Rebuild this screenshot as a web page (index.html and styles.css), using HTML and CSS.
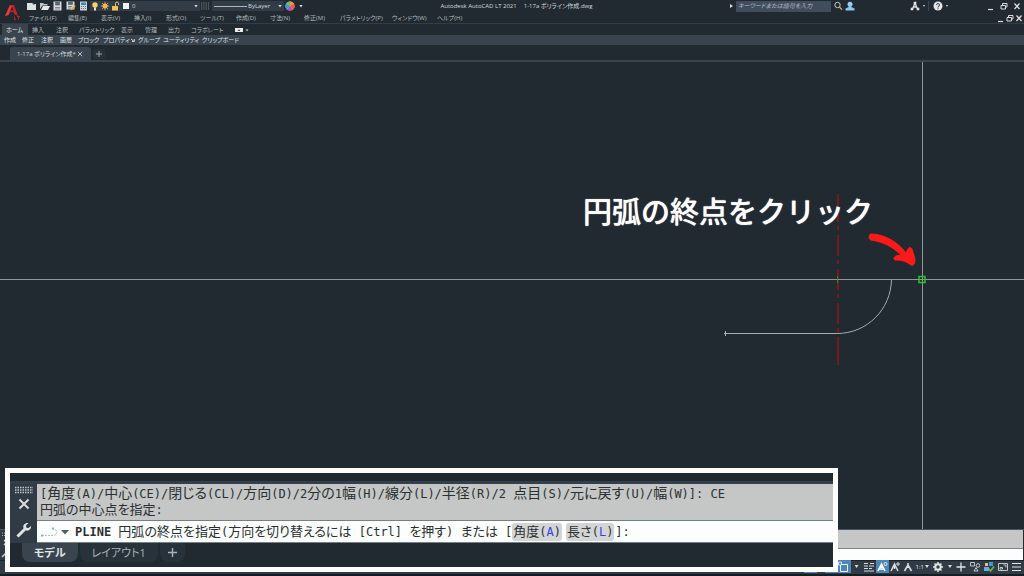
FILE: index.html
```html
<!DOCTYPE html>
<html lang="ja">
<head>
<meta charset="utf-8">
<title>Autodesk AutoCAD LT 2021</title>
<link rel="stylesheet" href="styles.css">
</head>
<body>
<header class="top">
  <button class="logo" aria-label="アプリケーション メニュー">
    <svg width="18" height="20" viewBox="0 0 18 20"><path d="M1 14 6 3h4l4 11-3.500-1.500L9.500 10H6l-1.500 3z" fill="#c4202b"/><path d="M6.500 8.500 8 5l1.500 3.500z" fill="#20292f"/><path d="M1 14 6 3l1.500 1-3 9z" fill="#e23a40"/><path d="M10.500 14.500v3h1.500M13 14.500h3M14.500 14.500v3" stroke="#b3262e" fill="none"/></svg>
  </button>
  <div class="bars">
    <div class="titlebar">
      <div class="quick">
        <button aria-label="新規"><svg width="10" height="10" viewBox="0 0 10 10"><path d="M0 2h5l1 1h3v6H0z" fill="#dfe2e3"/><path d="M5 1.500 8.500 4H6z" fill="#8e979c"/></svg></button>
        <button aria-label="開く"><svg width="10" height="10" viewBox="0 0 10 10"><path d="M0 8V2h3l1 1h3.500v1.500H2.500z" fill="#bfc5c8"/><path d="M3 5h7L8 9H1z" fill="#e6e8e9"/></svg></button>
        <button aria-label="保存"><svg width="10" height="10" viewBox="0 0 10 10"><path d="M.5.5h8v9h-8z" fill="#d5d8da"/><path d="M2.500 1h4v3h-4zM2 6.500h5M2 8h5" fill="#59656d" stroke="#59656d" stroke-width=".7"/></svg></button>
        <button aria-label="名前を付けて保存"><svg width="10" height="10" viewBox="0 0 10 10"><path d="M.5.500h8v8h-8z" fill="#d5d8da"/><path d="M2.500 1h4v2.500h-4zM2 5.500h4M2 7h3" fill="#59656d" stroke="#59656d" stroke-width=".7"/><path d="m4.500 9.500 1-2L8.500 4l1.200 1-3 3.700z" fill="#e5a53b"/></svg></button>
        <button aria-label="印刷"><svg width="10" height="10" viewBox="0 0 10 10"><path d="M1 .5h7v9H1z" fill="#cfd4d7"/><path d="M2 1.500h5V4H2z" fill="#3f85bd"/><path d="M2 5.500h5M2 7.500h5" stroke="#66727a" stroke-dasharray="1 1"/></svg></button>
      </div>
      <div class="layer">
        <svg width="42" height="10" viewBox="0 0 42 10"><circle cx="5" cy="4" r="2.700" fill="#f5cf72"/><path d="M4 6.500h2v3H4z" fill="#e8e1c8"/><circle cx="15" cy="5" r="2.500" fill="#f3b94f"/><path d="M15 .8v8.400M10.800 5h8.400M12 2l6 6M18 2l-6 6" stroke="#f3b94f" stroke-width=".8"/><path d="M22 5h6v4.500h-6z" fill="#f1c15c"/><path d="M25.500 5V2.500a1.500 1.500 0 0 1 3 0V4" stroke="#d9c48c" fill="none"/><path d="M33 2h6v6h-6z" fill="#f2f2f2"/></svg>
        <select aria-label="画層"><option>0</option></select>
        <i class="caret"></i>
      </div>
      <svg class="hatch" width="10" height="10" viewBox="0 0 10 10"><path d="M0 2h9M0 4h9M0 6h9M0 8h9" stroke="#737e85" stroke-dasharray="1.300 1"/></svg>
      <div class="linetype">
        <span class="rule"></span>
        <select aria-label="線種"><option>ByLayer</option></select>
        <i class="caret"></i>
      </div>
      <button class="wheel" aria-label="色"><svg width="10" height="10" viewBox="0 0 10 10"><circle cx="5" cy="5" r="4.600" fill="#f0b23c"/><path d="M5 5V.4A4.600 4.600 0 0 1 9 3z" fill="#f4913c"/><path d="M5 5 9 2.700A4.600 4.600 0 0 1 7.500 9z" fill="#e9595a"/><path d="M5 5 7.500 9A4.600 4.600 0 0 1 2 8.500z" fill="#a456c2"/><path d="M5 5 2 8.500A4.600 4.600 0 0 1 1 2.700z" fill="#3d95df"/><path d="M5 5 1 2.700A4.600 4.600 0 0 1 5 .4z" fill="#59bd77"/></svg></button>
      <i class="caret"></i>
      <h1><span>Autodesk AutoCAD LT 2021</span><span>1-17a ポリライン作成.dwg</span></h1>
      <div class="tools">
        <i class="caret side"></i>
        <input class="search" type="text" aria-label="検索" placeholder="キーワードまたは語句を入力">
        <button class="find" aria-label="検索"><svg width="9" height="10" viewBox="0 0 9 10"><circle cx="3.500" cy="4" r="2.700" fill="none" stroke="#c3c8ca"/><path d="m5.500 6 2.500 2.700" stroke="#d0a56a" stroke-width="1.300"/></svg></button>
        <button class="user" aria-label="サインイン"><svg width="10" height="10" viewBox="0 0 10 10"><circle cx="5" cy="3.200" r="2.500" fill="#9bcdf0"/><path d="M.5 9.500V7.500L3.700 6V4h2.600v2l3.200 1.500v2z" fill="#8cc5ee"/></svg></button>
        <button class="app" aria-label="App Store"><svg width="10" height="10" viewBox="0 0 10 10"><path d="m5 2-2.500 6M5 2l2.500 6M3 6h4" stroke="#e1e4e5" stroke-width="1.300" fill="none"/><path d="M3.700.7h2.600v2.600H3.700zM.7 6.800h2.600v2.400H.7zM6.700 6.800h2.600v2.400H6.700z" fill="#e1e4e5"/></svg></button>
        <i class="caret tiny"></i>
        <span class="bar"></span>
        <button class="help" aria-label="ヘルプ"><svg width="10" height="10" viewBox="0 0 10 10"><circle cx="5" cy="5" r="4.500" fill="#e4e6e7"/><path d="M3.500 4a1.500 1.500 0 1 1 1.500 1.500V6.500M5 7.300v1" fill="none" stroke="#3c4850"/></svg></button>
        <i class="caret tiny"></i>
      </div>
      <div class="win">
        <button aria-label="最小化"><svg width="8" height="10" viewBox="0 0 8 10"><path d="M1 8.500h5" stroke="#d6dadc" stroke-width="1.200"/></svg></button>
        <button aria-label="元に戻す"><svg width="8" height="10" viewBox="0 0 8 10"><path d="M1 4.500h4.500V8H1zM2.500 4V2.500H7V6H6" fill="none" stroke="#d6dadc"/></svg></button>
        <button aria-label="閉じる"><svg width="8" height="10" viewBox="0 0 8 10"><path d="m1.500 2.500 5 5.500m0-5.500-5 5.500" stroke="#e3e6e7" stroke-width="1.200"/></svg></button>
      </div>
    </div>
    <div class="menubar">
      <nav class="menus">
        <button>ファイル(F)</button><button>編集(E)</button><button>表示(V)</button><button>挿入(I)</button><button>形式(O)</button><button>ツール(T)</button><button>作成(D)</button><button>寸法(N)</button><button>修正(M)</button><button>パラメトリック(P)</button><button>ウィンドウ(W)</button><button>ヘルプ(H)</button>
      </nav>
      <div class="win inner">
        <button aria-label="図面を最小化"><svg width="8" height="10" viewBox="0 0 8 10"><path d="M1 8.500h5" stroke="#d6dadc" stroke-width="1.200"/></svg></button>
        <button aria-label="図面を元に戻す"><svg width="8" height="10" viewBox="0 0 8 10"><path d="M1 4.500h4.500V8H1zM2.500 4V2.500H7V6H6" fill="none" stroke="#d6dadc"/></svg></button>
        <button aria-label="図面を閉じる"><svg width="8" height="10" viewBox="0 0 8 10"><path d="m1.500 2.500 5 5.500m0-5.500-5 5.500" stroke="#e3e6e7" stroke-width="1.200"/></svg></button>
      </div>
    </div>
  </div>
</header>
<nav class="ribbon">
  <button class="on">ホーム</button><button>挿入</button><button>注釈</button><button>パラメトリック</button><button>表示</button><button>管理</button><button>出力</button><button>コラボレート</button>
  <button class="view" aria-label="リボン表示"><svg width="14" height="6" viewBox="0 0 14 6"><path d="M0 1h8v4H0z" fill="#e9ebec"/><path d="m3 4 1-2 1 2z" fill="#28323a"/><path d="M10.500 2.500h3L12 4.200z" fill="#d6dadc"/></svg></button>
</nav>
<div class="panels">
  <button>作成</button><button>修正</button><button>注釈</button><button>画層</button><button>ブロック</button><button>プロパティ<svg width="4" height="4" viewBox="0 0 4 4"><path d="m0 1 3 2.500M3.300 1v2.500H1" stroke="#d2d6d8" fill="none"/></svg></button><button>グループ</button><button>ユーティリティ</button><button>クリップボード</button>
</div>
<div class="files">
  <div class="file"><span>1-17a ポリライン作成*</span><button aria-label="タブを閉じる"><svg width="6" height="6" viewBox="0 0 6 6"><path d="m.8.800 4.400 4.400m0-4.400L.8 5.200" stroke="#b6bcc0"/></svg></button></div>
  <button class="newfile" aria-label="新しいタブ"><svg width="6" height="6" viewBox="0 0 6 6"><path d="M0 3h6M3 0v6" stroke="#9aa3a8"/></svg></button>
</div>
<main class="canvas">
  <svg class="drawing" width="100%" height="100%" fill="none">
    <path d="M838 132V160M838 164V168M838 173V194M838 198V202M838 207V228M838 232V236M838 241V262M838 266V270M838 275V303" stroke="#741a20" stroke-width="2"/>
    <path d="M725 271.500h112c30 0 54-24 54.500-54" stroke="#a3acaf"/>
    <path d="M725.500 269v5M724 271.500h3" stroke="#b0b7ba"/>
    <line x1="0" y1="217.500" x2="100%" y2="217.500" stroke="#8e989c"/>
    <line x1="922.500" y1="0" x2="922.500" y2="100%" stroke="#8e989c"/>
    <path d="M837.500 214v7" stroke="#258b34"/>
    <path d="M919 214.500h6v6h-6z" stroke="#24c52b" stroke-width="1.500"/>
    <path d="M871 172C884 172 898 180 906 191L908 187C909 185 911 185 912 187L915 197C915 201 914 204 911 203C906 199 901 198 895 198C893 197 894 195 896 194L901 193C893 185 884 180 871 178C868 177 869 172 871 172z" fill="#ff1a1a" stroke="#ff1a1a"/>
  </svg>
  <p class="note">円弧の終点をクリック</p>
</main>
<div class="dock">
  <div class="dock-grip"><svg width="12" height="30" viewBox="0 0 12 30"><path d="M2 3h9M2 5.500h9" stroke="#aeb6ba" stroke-dasharray="1 1"/><path d="m4 10 5 5m0-5-5 5M2 27l6-6" stroke="#c9ced0" stroke-width="1.500"/></svg></div>
  <div class="dock-lines"><div class="dock-log"></div><div class="dock-input"></div></div>
</div>
<footer class="status">
  <button class="blue narrow" aria-label="直交モード"></button>
  <button class="blue" aria-label="スナップ"></button>
  <button class="blue" aria-label="オブジェクト スナップ"><svg width="12" height="12" viewBox="0 0 12 12"><path d="M2.500 3.500h7v7h-7z" fill="none" stroke="#e9f2fa"/><path d="M.5 1h3v3h-3z" fill="#5a93c6" stroke="#e9f2fa" stroke-width=".8"/></svg></button>
  <i class="caret"></i>
  <button aria-label="線の太さ"><svg width="12" height="12" viewBox="0 0 12 12"><path d="M1 2.500h4M7 2.500h4M1 5h4M6 5h5M1 7.500h4M6 7.500h3M1 10h10" stroke="#d6dadc" stroke-width="1.100"/></svg></button>
  <button class="blue" aria-label="注釈オブジェクト"><svg width="12" height="12" viewBox="0 0 12 12"><path d="m2 10 3.500-7L9 10M5.500 4v3M3.500 8h4" fill="none" stroke="#fff" stroke-width="1.600"/><circle cx="9.500" cy="3" r="1.500" fill="none" stroke="#fff" stroke-width=".8"/></svg></button>
  <button aria-label="自動尺度"><svg width="12" height="12" viewBox="0 0 12 12"><path d="m2 10 3.500-7L9 10M5.500 4v4" fill="none" stroke="#d9dddf" stroke-width="1.500"/><path d="M9 1v4M7 3h4" stroke="#d9dddf"/></svg></button>
  <button aria-label="注釈尺度を表示"><svg width="12" height="12" viewBox="0 0 12 12"><path d="m2.500 10 3.500-6 3.500 6M6 2v5" fill="none" stroke="#d9dddf" stroke-width="1.600"/></svg></button>
  <button class="scale">1:1</button><i class="caret close"></i>
  <span class="bar"></span>
  <button aria-label="ワークスペース"><svg width="12" height="12" viewBox="0 0 12 12"><circle cx="6" cy="6" r="2.700" fill="none" stroke="#e2e5e6" stroke-width="2"/><path d="M6 1v2M6 9v2M1 6h2M9 6h2M2.500 2.500l1.300 1.300M8.200 8.200l1.300 1.300M9.500 2.500 8.200 3.800M3.800 8.200 2.500 9.500" stroke="#e2e5e6" stroke-width="1.500"/></svg></button>
  <i class="caret near"></i>
  <button class="spaced" aria-label="注釈モニター"><svg width="12" height="12" viewBox="0 0 12 12"><path d="M6 1.500v9M1.500 6h9" stroke="#e2e5e6" stroke-width="1.300"/></svg></button>
  <button class="spaced" aria-label="選択表示"><svg width="12" height="12" viewBox="0 0 12 12"><path d="M1.500 1.500h4v3.500h-4zM5 10l2-3.500L9 10z" fill="none" stroke="#bfc6ca"/><circle cx="9" cy="4.500" r="1.800" fill="none" stroke="#bfc6ca"/></svg></button>
  <button class="spaced" aria-label="ハードウェア"><svg width="12" height="12" viewBox="0 0 12 12"><path d="M2 2h3v3H2z" fill="#efc167"/><path d="M6 1h4v4H6z" fill="#4893d3"/><path d="M1 6h5v4H1z" fill="#68ade0"/><path d="m5.500 7.500 2 2.500L11 5.500" fill="none" stroke="#63b85b" stroke-width="1.600"/></svg></button>
  <button aria-label="フルスクリーン"><svg width="12" height="12" viewBox="0 0 12 12"><path d="M1.500 2.500h9v7h-9z" fill="none" stroke="#bfc6ca"/><path d="M6.500 4H9v2.500M3 6.500h2.500V8H3z" fill="none" stroke="#bfc6ca"/></svg></button>
  <button aria-label="カスタマイズ"><svg width="12" height="12" viewBox="0 0 12 12"><path d="M2 2.500h9M2 6h9M2 9.500h9" stroke="#e2e5e6" stroke-width="1.200"/></svg></button>
</footer>
<section class="callout">
  <div class="command">
    <div class="side-tools">
      <svg width="20" height="8" viewBox="0 0 20 8"><path d="M1 1.500h18M1 4h18M1 6.500h18" stroke="#bec6ca" stroke-width="1.500" stroke-dasharray="1.500 1"/></svg>
      <button aria-label="閉じる"><svg width="12" height="12" viewBox="0 0 12 12"><path d="m1.500 1.500 9 9m0-9-9 9" stroke="#d9dddf" stroke-width="2"/></svg></button>
      <button class="wrench" aria-label="カスタマイズ"><svg width="16" height="16" viewBox="0 0 16 16"><path d="M1.500 14.500 9 7" stroke="#dfe3e5" stroke-width="3"/><path d="M12.500 1C9 .5 6.500 3 7.500 6l2.500 2.500c3 .8 5.500-1.500 5-4.500l-2.500 2-2.200-.300L10 3.500z" fill="#dfe3e5"/></svg></button>
    </div>
    <div class="lines">
      <div class="log">
        <p class="options">[<span>角度</span>(A)/<span>中心</span>(CE)/<span>閉じる</span>(CL)/<span>方向</span>(D)/2<span>分の</span>1<span>幅</span>(H)/<span>線分</span>(L)/<span>半径</span>(R)/2 <span>点目</span>(S)/<span>元に戻す</span>(U)/<span>幅</span>(W)]: CE</p>
        <p><span>円弧の中心点を指定</span>:</p>
      </div>
      <div class="prompt">
        <svg width="28" height="12" viewBox="0 0 28 12"><path d="M1 9.500h11c5 0 5-6 0-7" fill="none" stroke="#a9bfcb" stroke-dasharray="2 1"/><path d="M0 8.500h2v2H0zM11 1.500h2v2h-2z" fill="#75b5dc"/><path d="M20 4h8l-4 4.500z" fill="#555e62"/></svg>
        <p><b>PLINE</b> <span>円弧の終点を指定</span>(<span>方向を切り替えるには</span> [Ctrl] <span>を押す</span>) <span>または</span> [<button><span>角度</span>(<em>A</em>)</button><button><span>長さ</span>(<em>L</em>)</button>]:</p>
      </div>
    </div>
  </div>
  <div class="sheets">
    <button class="on">モデル</button><button>レイアウト1</button><button class="add" aria-label="新規レイアウト"><svg width="9" height="9" viewBox="0 0 9 9"><path d="M0 4.500h9M4.500 0v9" stroke="#a9b1b5" stroke-width="1.500"/></svg></button>
  </div>
</section>
</body>
</html>
```
FILE: styles.css
```css
* { box-sizing: border-box; }
body {
  margin: 0;
  height: 100vh;
  display: flex;
  flex-direction: column;
  overflow: hidden;
  position: relative;
  background: #202a30;
  color: #d6dadc;
  font: 6px/10px "Open Sans", "Noto Sans CJK JP", sans-serif;
  font-feature-settings: "palt";
}
button, select, input {
  margin: 0;
  padding: 0;
  border: 0;
  background: none;
  color: inherit;
  font: inherit;
  font-feature-settings: inherit;
  text-align: left;
  white-space: nowrap;
}
svg { display: block; flex: none; }
p { margin: 0; }
.caret {
  flex: none;
  width: 4px;
  height: 3px;
  background: #d6dadc;
  clip-path: polygon(0 0, 100% 0, 50% 100%);
}
.caret.side { width: 3px; height: 4px; clip-path: polygon(0 0, 100% 50%, 0 100%); }
.caret.tiny { width: 2px; height: 2px; margin: 0 3px; }
.bar { width: 1px; height: 10px; background: #3c474f; }

.top { display: flex; border-bottom: 1px solid #323d47; }
.logo { width: 24px; padding-left: 4px; }
.bars { flex: 1; }
.titlebar { display: flex; align-items: center; height: 12px; }
.quick { display: flex; gap: 3px; padding-left: 3px; }
.layer, .linetype { display: flex; align-items: center; height: 10px; background: #313c46; }
.layer { width: 110px; margin-left: 1px; padding-right: 2px; }
.layer select, .linetype select { flex: 1; appearance: none; height: 10px; }
.hatch { margin: 0 1px; }
.linetype { width: 72px; padding: 0 2px; }
.rule { width: 33px; height: 1px; margin-right: 1px; background: #aeb5b8; }
.wheel { margin: 0 4px 0 1px; }
h1 {
  flex: 1;
  display: flex;
  justify-content: center;
  gap: 7px;
  margin: 0;
  font: inherit;
  white-space: nowrap;
}
.tools { display: flex; align-items: center; width: 257px; }
.search { width: 95px; height: 11px; margin: 0 3px; padding: 0 2px; background: #414d5d; font-style: italic; }
.search::placeholder { color: #b5bcc4; opacity: 1; }
.user { margin-left: 2px; }
.app { margin-left: 55px; }
.help { margin-left: 4px; }
.win { display: flex; gap: 5px; width: 37px; }
.win.inner { width: 27px; gap: 1px; }
.menubar { display: flex; justify-content: space-between; align-items: center; height: 11px; padding-left: 5px; color: #b5bbbe; }
.menus { display: grid; grid-template-columns: 39px 33px 33px 32px 34px 36px 34px 34px 36px 52px 45px 40px; }

.ribbon {
  display: grid;
  grid-template-columns: 26px 24px 23px 42px 24px 23px 23px 48px 14px;
  align-items: center;
  height: 11px;
  padding-left: 2px;
  color: #b5bbbe;
}
.ribbon button { padding: 0 4px; height: 11px; }
.ribbon .on { background: #39444f; color: #e8ebec; }
.ribbon .view { height: auto; padding: 0; }
.panels {
  display: grid;
  grid-template-columns: 18px 19px 19px 18px 25px 35px 25px 39px 44px;
  align-items: center;
  height: 10px;
  padding-left: 1px;
  background: #39444f;
  color: #dfe2e4;
}
.panels button { display: flex; align-items: center; gap: 1px; padding-left: 3px; }
.files { display: flex; align-items: center; height: 17px; padding: 2px 0 0 10px; border-bottom: 2px solid #39444f; }
.file {
  display: flex;
  align-items: center;
  justify-content: space-between;
  width: 81px;
  height: 13px;
  padding: 0 8px 0 7px;
  border-radius: 3px 3px 0 0;
  background: #39444f;
}
.newfile { margin-left: 2px; padding: 2px 3px; border-radius: 2px; background: #28323a; }

.canvas { flex: 1; position: relative; min-height: 0; }
.drawing { position: absolute; inset: 0; }
.note {
  position: absolute;
  left: 583px;
  top: 128px;
  color: #fff;
  font: 500 29px/40px "Noto Sans CJK JP", sans-serif;
  font-feature-settings: normal;
  text-shadow: 0 0 1px #fff;
  white-space: nowrap;
}
.dock { display: flex; height: 31px; padding-right: 1px; border-top: 1px solid #4b565e; }
.dock-grip { width: 12px; background: #303b45; }
.dock-lines { flex: 1; }
.dock-log { height: 19px; background: #c4c7c6; border-bottom: 1px solid #7b8488; }
.dock-input { height: 11px; background: #fbfefd; }
.status {
  display: flex;
  align-items: center;
  justify-content: flex-end;
  height: 16px;
  padding: 0 1px 2px;
  border-top: 1px solid #1b2329;
  border-bottom: 2px solid #161d22;
  background: #303b45;
}
.status button { height: 13px; padding-right: 1px; }
.status .blue { width: 13px; background: #4f86b8; }
.status .narrow { margin-right: 8px; }
.status .caret { margin: 0 4px; }
.status .scale { color: #e2e5e6; padding: 0 0 0 1px; }
.status .caret.close { margin: 0 2px 0 1px; }
.status .caret.near { margin: 0 3px; }
.status .spaced { padding-right: 2px; }

.callout {
  position: absolute;
  left: 5px;
  right: 186px;
  bottom: 4px;
  padding-top: 8px;
  border: 5px solid #fff;
  background: #202a30;
}
.command { display: flex; border-top: 3px solid #343f4c; background: #303b45; }
.side-tools { display: flex; flex-direction: column; align-items: center; gap: 4px; width: 27px; padding-top: 2px; }
.wrench { margin-top: 8px; }
.lines { flex: 1; color: #2b3032; font: 12px/16px "DejaVu Sans Mono", "Noto Sans CJK JP", monospace; font-feature-settings: "palt"; white-space: nowrap; }
.lines span { font-family: "Noto Sans CJK JP", sans-serif; font-size: 13px; line-height: 0; }
.lines .options span { font-size: 14px; }
.log { height: 37px; padding: 2px 3px; border-bottom: 1px solid #777f82; background: #c4c7c6; }
.prompt { display: flex; align-items: center; gap: 6px; height: 22px; padding-left: 4px; border-bottom: 1px solid #777f82; background: #fbfefd; }
.prompt button { margin-right: 4px; padding: 1px; border-radius: 3px; background: #d3d5d5; }
.prompt button:last-child { margin-right: 1px; }
.prompt em { color: #3c3cf0; font-style: normal; }
.sheets { display: flex; gap: 2px; height: 24px; padding-left: 12px; color: #a9b1b5; font: 11px/18px "Open Sans", "Noto Sans CJK JP", sans-serif; font-feature-settings: "palt"; }
.sheets button { height: 19px; padding: 0 12px; border-radius: 0 0 8px 8px; background: #28323b; }
.sheets .on { background: #39444f; color: #e1e4e5; font-weight: 700; }
.sheets .add { padding: 0 8px; }
```
